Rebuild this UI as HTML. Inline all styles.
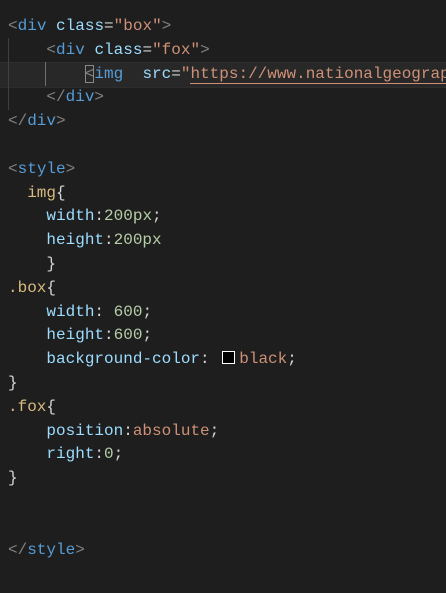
<!DOCTYPE html>
<html><head><style>
body{margin:0;background:#1e1e1e;width:446px;height:593px;overflow:hidden;position:relative}
pre{margin:0;position:absolute;left:8px;top:15px;width:438px;overflow:hidden;font:16px/23.8px "Liberation Mono",monospace;color:#d4d4d4;white-space:pre}
.p{color:#808080}.t{color:#569cd6}.a{color:#9cdcfe}.s{color:#ce9178}.n{color:#b5cea8}.sel{color:#d7ba7d}
.cur{position:absolute;left:0;top:62px;width:446px;height:24px;background:#282828;border-top:1px solid #2d2d2d;border-bottom:1px solid #2d2d2d}
.g{position:absolute;width:1px;background:#404040}
.sw{display:inline-block;width:11px;height:11px;border:1px solid #fff;background:#000;margin:0 4px 0 3px;vertical-align:-1px}
.u{border-bottom:1px solid #ce9178}
.cb{outline:1px solid #888;outline-offset:-1px}
</style></head><body>
<div class="cur"></div>
<div class="g" style="left:8px;top:38px;height:72px"></div>
<div class="g" style="left:45px;top:62px;height:24px;background:#707070"></div>
<pre><span class="p">&lt;</span><span class="t">div</span> <span class="a">class</span>=<span class="s">"box"</span><span class="p">&gt;</span>
    <span class="p">&lt;</span><span class="t">div</span> <span class="a">class</span>=<span class="s">"fox"</span><span class="p">&gt;</span>
        <span class="p cb">&lt;</span><span class="t">img</span>  <span class="a">src</span>=<span class="s">"<span class="u">https://www.nationalgeograp</span></span>
    <span class="p">&lt;/</span><span class="t">div</span><span class="p">&gt;</span>
<span class="p">&lt;/</span><span class="t">div</span><span class="p">&gt;</span>

<span class="p">&lt;</span><span class="t">style</span><span class="p">&gt;</span>
  <span class="sel">img</span>{
    <span class="a">width</span>:<span class="n">200px</span>;
    <span class="a">height</span>:<span class="n">200px</span>
    }
<span class="sel">.box</span>{
    <span class="a">width</span>: <span class="n">600</span>;
    <span class="a">height</span>:<span class="n">600</span>;
    <span class="a">background-color</span>: <span class="sw"></span><span class="s">black</span>;
}
<span class="sel">.fox</span>{
    <span class="a">position</span>:<span class="s">absolute</span>;
    <span class="a">right</span>:<span class="n">0</span>;
}


<span class="p">&lt;/</span><span class="t">style</span><span class="p">&gt;</span></pre>
</body></html>
